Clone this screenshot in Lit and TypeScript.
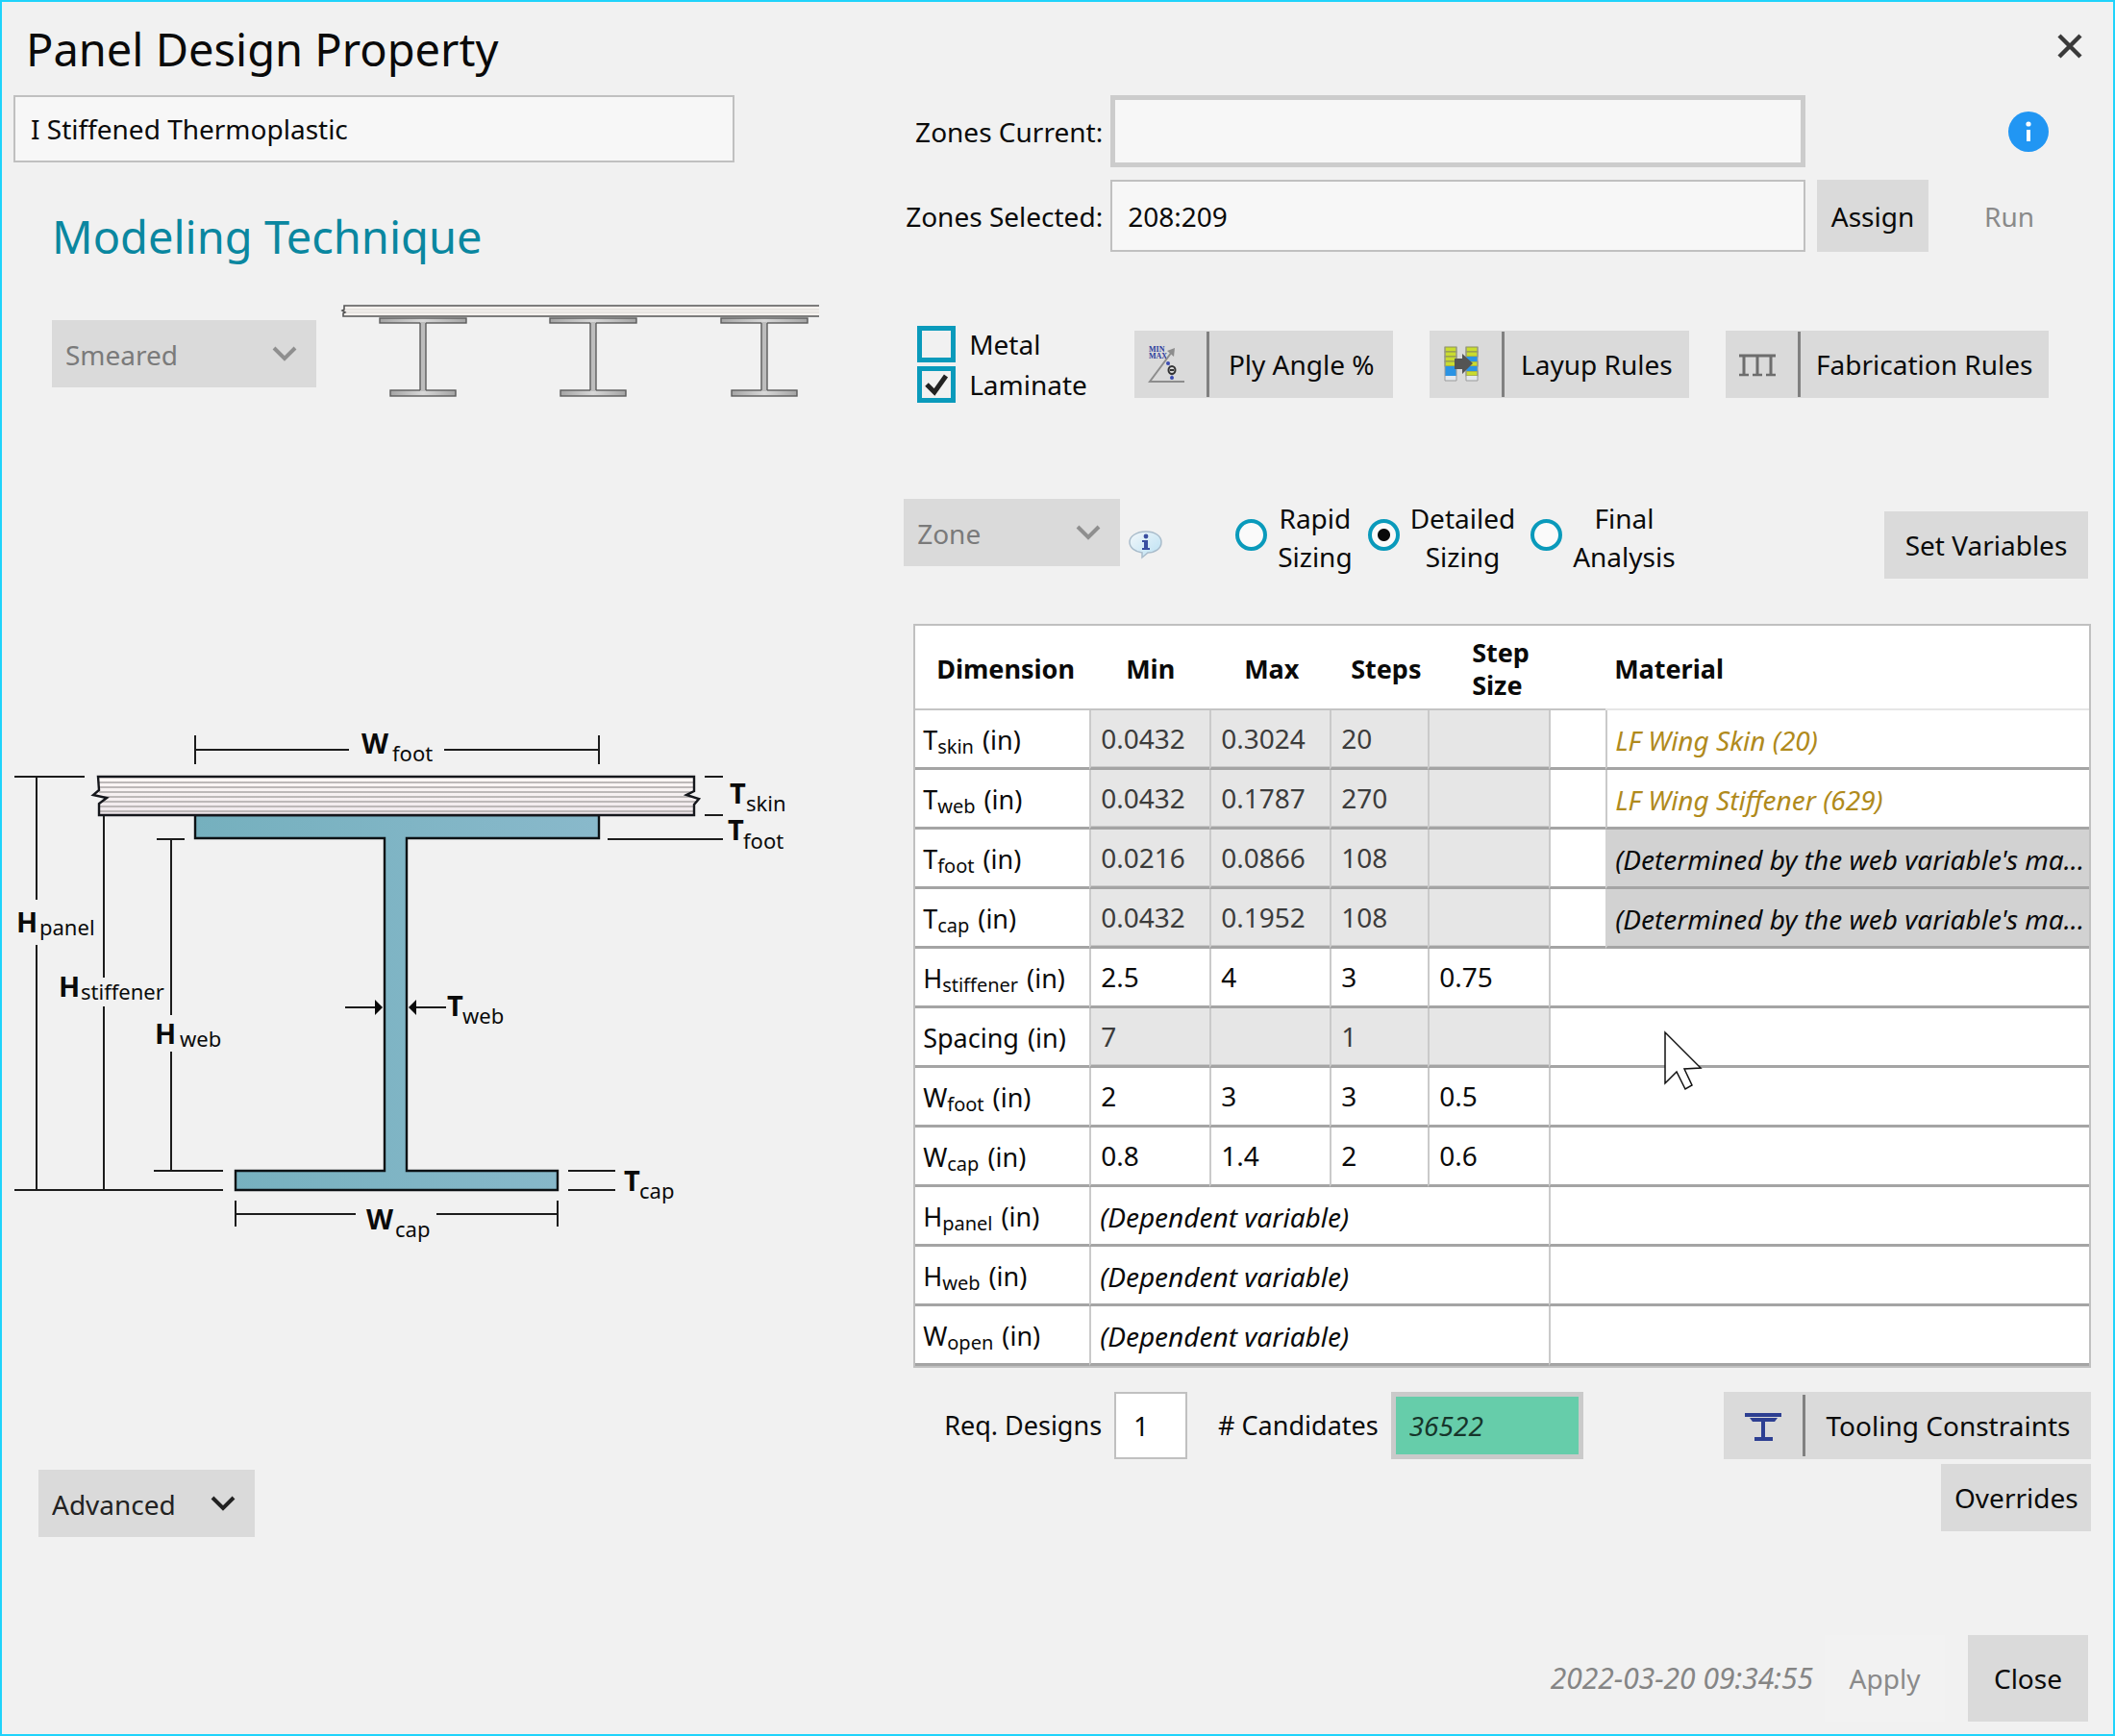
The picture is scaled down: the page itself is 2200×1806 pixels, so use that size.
import { LitElement, html, css, svg, nothing } from "lit";
import { customElement, state } from "lit/decorators.js";

interface Row {
  base: string;
  sub?: string;
  kind: "locked" | "open" | "dependent";
  values?: string[];
  material?: string;
  tone?: "link" | "derived";
}

const ROWS: Row[] = [
  { base: "T", sub: "skin", kind: "locked", values: ["0.0432", "0.3024", "20", ""], material: "LF Wing Skin (20)", tone: "link" },
  { base: "T", sub: "web", kind: "locked", values: ["0.0432", "0.1787", "270", ""], material: "LF Wing Stiffener (629)", tone: "link" },
  { base: "T", sub: "foot", kind: "locked", values: ["0.0216", "0.0866", "108", ""], material: "(Determined by the web variable's ma...", tone: "derived" },
  { base: "T", sub: "cap", kind: "locked", values: ["0.0432", "0.1952", "108", ""], material: "(Determined by the web variable's ma...", tone: "derived" },
  { base: "H", sub: "stiffener", kind: "open", values: ["2.5", "4", "3", "0.75"] },
  { base: "Spacing", kind: "locked", values: ["7", "", "1", ""] },
  { base: "W", sub: "foot", kind: "open", values: ["2", "3", "3", "0.5"] },
  { base: "W", sub: "cap", kind: "open", values: ["0.8", "1.4", "2", "0.6"] },
  { base: "H", sub: "panel", kind: "dependent" },
  { base: "H", sub: "web", kind: "dependent" },
  { base: "W", sub: "open", kind: "dependent" },
];

const COLUMNS = ["Min", "Max", "Steps", "Step Size"];

const chevron = html`<svg class="chevron" viewBox="0 0 28 18" aria-hidden="true">
  <path d="M3 3 L14 14 L25 3" fill="none" stroke="currentColor" stroke-width="4" />
</svg>`;

const plyIcon = html`<svg class="icon" viewBox="0 0 40 40" aria-hidden="true">
  <text x="1" y="7" font-family="Liberation Serif, serif" font-weight="700" font-size="8" fill="#2b3b9c">MIN</text>
  <text x="1" y="14" font-family="Liberation Serif, serif" font-weight="700" font-size="8" fill="#2b3b9c">MAX</text>
  <path d="M38 38 H2 L25 7" fill="none" stroke="#8d8d8d" stroke-width="2" />
  <path d="M28 3 L27 12 L20 6 Z" fill="#8d8d8d" />
  <path d="M20 18 Q26 24 25 35" fill="none" stroke="#8b93c4" stroke-width="1" />
  <circle cx="21" cy="19" r="2" fill="#3a4bb0" />
  <circle cx="25" cy="34" r="2" fill="#3a4bb0" />
  <ellipse cx="25" cy="26" rx="3.5" ry="4" fill="#dadada" stroke="#333" stroke-width="2" />
  <path d="M23 26 H27" stroke="#333" stroke-width="2" />
</svg>`;

const layupIcon = html`<svg class="icon" viewBox="0 0 40 40" aria-hidden="true">
  <g stroke="#8b8f5a" stroke-width="1">
    <rect x="2" y="2" width="12" height="5" fill="#c9dc2f" />
    <rect x="2" y="7" width="12" height="5" fill="#c9dc2f" />
    <rect x="2" y="12" width="12" height="5" fill="#c9dc2f" />
    <rect x="2" y="17" width="12" height="5" fill="#c9dc2f" />
    <rect x="24" y="2" width="12" height="5" fill="#c9dc2f" />
    <rect x="24" y="7" width="12" height="5" fill="#c9dc2f" />
    <rect x="24" y="17" width="12" height="5" fill="#c9dc2f" />
    <rect x="24" y="27" width="12" height="5" fill="#c9dc2f" />
  </g>
  <rect x="2" y="22" width="12" height="10" fill="#2a93e4" />
  <rect x="24" y="12" width="12" height="5" fill="#2a93e4" />
  <rect x="24" y="22" width="12" height="5" fill="#2a93e4" />
  <rect x="2" y="32" width="12" height="5" fill="#e4e8ee" />
  <rect x="24" y="32" width="12" height="5" fill="#e4e8ee" />
  <path d="M2 2 V37 H14 V2 M24 2 V37 H36 V2" fill="none" stroke="#9a9a9a" stroke-width="1" />
  <path d="M12 14 H20 V9 L31 19 L20 30 V25 H12 Z" fill="#545454" />
</svg>`;

const fabricationIcon = html`<svg class="icon" viewBox="0 0 40 40" aria-hidden="true">
  <g fill="none" stroke="#6d6d6d">
    <path d="M1 11 H39" stroke-width="3" />
    <path d="M6 11 V31 M20 11 V31 M34 11 V31" stroke-width="3" />
    <path d="M1 31 H11 M15 31 H25 M29 31 H39" stroke-width="2.4" />
  </g>
</svg>`;

const toolingIcon = html`<svg class="icon" viewBox="0 0 40 40" aria-hidden="true">
  <rect x="1" y="7" width="38" height="4" fill="#2d3f92" />
  <path d="M6 12 H35 L32 16 H9 Z" fill="#2d3f92" />
  <rect x="18" y="15" width="4" height="18" fill="#2d3f92" />
  <rect x="11" y="32" width="19" height="4" fill="#2d3f92" />
</svg>`;

@customElement("app-root")
export class AppRoot extends LitElement {
  @state() private sizing = "detailed";

  static styles = css`
    :host {
      display: block;
      font-family: "Noto Sans", "Open Sans", sans-serif;
      font-size: 28px;
      line-height: 40px;
      color: #0a0a0a;
    }
    * { box-sizing: border-box; }
    button, input, select {
      font: inherit;
      color: inherit;
      margin: 0;
      border-radius: 0;
    }
    .window {
      display: flex;
      flex-direction: column;
      min-height: 100vh;
      background: #f1f1f1;
      border: 2px solid #1fd3fb;
    }
    .titlebar {
      display: flex;
      justify-content: space-between;
      align-items: flex-start;
      padding: 14px 29px 13px 25px;
    }
    h1, h2 {
      margin: 0;
      font-size: 47px;
      line-height: 70px;
      font-weight: 400;
    }
    h2 {
      color: #0a87a0;
      margin: 42px 0 34px 40px;
    }
    .dismiss {
      width: 32px;
      height: 32px;
      margin-top: 16px;
      padding: 2px;
      border: 0;
      background: none;
    }
    .dismiss svg { display: block; width: 28px; height: 28px; }
    .body {
      display: grid;
      grid-template-columns: minmax(0, 3fr) minmax(0, 4fr);
      padding: 0 23px 0 12px;
    }
    .left { display: flex; flex-direction: column; align-items: flex-start; }
    .field {
      width: 100%;
      height: 75px;
      padding: 0 16px;
      border: 2px solid #c0c0c0;
      background: #f7f7f7;
    }
    .field.name { width: 750px; max-width: 90%; height: 70px; }
    .field.readonly { border: 5px solid #cccccc; }
    .technique { display: flex; align-items: center; gap: 25px; margin-left: 40px; }
    .profile { width: 500px; height: 106px; }
    .dropdown {
      display: grid;
      align-items: center;
      height: 70px;
      background: #dadada;
    }
    .dropdown > * { grid-area: 1 / 1; }
    .dropdown select {
      appearance: none;
      width: 100%;
      height: 70px;
      padding: 2px 14px 0;
      border: 0;
      background: none;
      opacity: 1;
    }
    .dropdown.off { color: #7a7a7a; }
    .dropdown.wide { width: 275px; }
    .dropdown.narrow { width: 225px; }
    .chevron {
      width: 28px;
      height: 18px;
      justify-self: end;
      margin-right: 19px;
      pointer-events: none;
    }
    .off .chevron { color: #8f8f8f; }
    .drawing { width: 100%; max-width: 810px; margin: 319px 0 219px 0; display: block; }
    .advanced { margin-left: 26px; color: #222; }
    .zones {
      display: grid;
      grid-template-columns: 207px minmax(0, 1fr) 120px 148px;
      gap: 13px 8px;
      align-items: center;
      padding-right: 13px;
    }
    .zones label { text-align: right; white-space: nowrap; justify-self: end; }
    .button {
      height: 70px;
      padding: 0 14px;
      border: 0;
      background: #dadada;
      white-space: nowrap;
    }
    .button.tall { height: 75px; }
    .button.quiet { background: none; color: #8a8a8a; padding-left: 18px; }
    .assign { margin-left: 4px; }
    .info { grid-column: 4; justify-self: end; margin-right: 31px; width: 42px; height: 42px; }
    .kinds { display: flex; align-items: center; padding: 77px 44px 0 14px; }
    .checks { display: grid; gap: 4px; flex: 0 0 226px; }
    .check { display: flex; align-items: center; gap: 14px; height: 38px; }
    .check input {
      appearance: none;
      display: grid;
      width: 40px;
      height: 38px;
      border: 5px solid #0a9abb;
    }
    .tick { grid-area: 1 / 1; width: 40px; height: 38px; pointer-events: none; }
    .box { display: grid; }
    .box input { grid-area: 1 / 1; }
    .rules { display: grid; grid-template-columns: 4fr 4fr 5fr; gap: 38px; flex: 1; }
    .iconic { display: flex; align-items: center; padding: 0; text-align: left; }
    .iconic .pane {
      display: flex;
      align-items: center;
      justify-content: center;
      flex: 0 0 78px;
      height: 68px;
      padding-right: 8px;
      border-right: 3px solid #808080;
    }
    .iconic .caption { flex: 1; text-align: center; }
    .icon { width: 40px; height: 40px; }
    .modes { display: flex; align-items: flex-start; padding: 100px 3px 0 0; }
    .bubble { width: 36px; height: 36px; margin: 30px 0 0 9px; }
    .radios { display: flex; gap: 16px; margin-left: 75px; }
    .radio { display: flex; align-items: center; gap: 11px; text-align: center; }
    .radio .line { display: block; }
    .radio input {
      appearance: none;
      width: 33px;
      height: 33px;
      margin-bottom: 5px;
      border: 4px solid #0a9abb;
      border-radius: 50%;
      background: #fafafa;
    }
    .radio input:checked { background: radial-gradient(circle, #0a0a0a 6px, #fafafa 7px); }
    .variables { margin: 13px 0 0 auto; width: 212px; }
    .sheet {
      position: relative;
      margin: 47px 0 0 10px;
      border: 2px solid #c0c0c0;
      background: #fff;
    }
    table { width: 100%; table-layout: fixed; border-collapse: separate; border-spacing: 0; }
    .c-dim { width: 181px; }
    .c-min { width: 125px; }
    .c-max { width: 125px; }
    .c-steps { width: 102px; }
    .c-size { width: 126px; }
    .c-gap { width: 59px; }
    th, td { padding: 0; text-align: left; font-weight: 400; }
    thead th {
      height: 88px;
      padding-top: 3px;
      font-weight: 700;
      font-size: 27px;
      line-height: 34px;
      border-bottom: 2px solid #c4c4c4;
    }
    thead th:last-child { padding-left: 9px; border-bottom-color: #e6e6e6; }
    thead .h-dim { padding-left: 22px; }
    thead .h-min { padding-left: 38px; }
    thead .h-max { padding-left: 36px; }
    thead .h-steps { padding-left: 22px; }
    thead .h-size { padding-left: 46px; }
    tbody th, tbody td { height: 62px; border-bottom: 3px solid #a4a4a4; border-left: 2px solid #cacaca; }
    tbody th { padding: 3px 0 0 8px; border-left: 0; white-space: nowrap; font-size: 27px; }
    .unit { margin-left: 9px; }
    .sub { font-size: 20px; line-height: 20px; position: relative; top: 4px; }
    .cell {
      display: block;
      width: 100%;
      height: 59px;
      padding: 0 0 1px 10px;
      border: 0;
      background: none;
    }
    .locked .cell { background: #e6e6e6; color: #3c3c3c; border-bottom: 1px solid #cacaca; opacity: 1; }
    .note { padding: 3px 0 0 9px; font-style: italic; }
    .material { padding: 3px 0 0 8px; font-style: italic; white-space: nowrap; }
    .material.link { color: #b08a1c; }
    .material.derived { background: #d2d2d2; border-left-color: #d2d2d2; }
    .pointer { position: absolute; left: 778px; top: 421px; width: 42px; height: 64px; }
    .totals { display: flex; align-items: center; padding: 25px 0 5px 42px; }
    .totals label { font-size: 27px; }
    .designs { width: 76px; height: 70px; margin: 0 32px 0 13px; padding: 0 18px; background: #fff; border: 2px solid #c0c0c0; }
    .candidates {
      width: 200px;
      height: 70px;
      margin-left: 13px;
      padding: 0 14px;
      border: 5px solid #cacaca;
      background: #66cdaa;
      color: #16352b;
      font-style: italic;
    }
    .tooling { margin-left: auto; width: 382px; }
    .tooling .pane { flex-basis: 85px; padding-right: 0; height: 64px; }
    .overrides { display: block; margin-left: auto; width: 156px; }
    .footer {
      display: flex;
      justify-content: flex-end;
      align-items: center;
      margin-top: auto;
      padding: 0 26px 13px 0;
    }
    .stamp { color: #858585; font-size: 30px; font-style: italic; margin-right: 12px; }
    .footer .button { height: 90px; width: 125px; }
    .footer .apply { background: #f2f2f2; color: #8a8a8a; margin-right: 24px; }
  `;

  private techniqueArt() {
    const beam = (x: number) => svg`
      <rect x=${x} y="17" width="90" height="5" fill="url(#steel)" stroke="#5c5c5c" stroke-width="1.4" />
      <rect x=${x + 11} y="92" width="68" height="6" fill="url(#steel)" stroke="#5c5c5c" stroke-width="1.4" />
      <rect x=${x + 42} y="21" width="6" height="72" fill="#bdbdbd" />
      <path d="M${x + 42} 22 V92 M${x + 48} 22 V92" stroke="#5c5c5c" stroke-width="1.4" />`;
    return html`<svg class="profile" viewBox="0 1 500 106" role="img" aria-label="Smeared stiffeners">
      <defs>
        <linearGradient id="steel"><stop offset="0" stop-color="#a4a4a4" /><stop offset=".5" stop-color="#d8d8d8" /><stop offset="1" stop-color="#a4a4a4" /></linearGradient>
      </defs>
      <rect x="4" y="4" width="494" height="11" fill="#f4f1ee" />
      <path d="M4 8 H498 M4 11 H498" stroke="#dcd8d5" stroke-width="1" />
      <path d="M498 4 H4 V8 L2 9 L5 11 L3 12 V15 H498" fill="none" stroke="#555" stroke-width="1.6" />
      ${beam(41)}${beam(218)}${beam(396)}
    </svg>`;
  }

  private sectionDrawing() {
    const label = (x: number, y: number, base: string, sx: number, sy: number, sub: string) => svg`
      <text x=${x} y=${y} font-weight="700" font-size="29">${base}</text>
      <text x=${sx} y=${sy} font-size="22">${sub}</text>`;
    return html`<svg class="drawing" viewBox="14 740 810 570" role="img" aria-label="I stiffener cross section">
      <defs>
        <linearGradient id="teal" gradientUnits="userSpaceOnUse" x1="203" y1="0" x2="623" y2="0">
          <stop offset="0" stop-color="#75b0be" /><stop offset="1" stop-color="#89b9cb" />
        </linearGradient>
        <linearGradient id="ply" x1="0" y1="0" x2="0" y2="1">
          <stop offset="0" stop-color="#fdf8f6" /><stop offset="1" stop-color="#efe8ec" />
        </linearGradient>
      </defs>
      <path d="M203 848 H623 V872 H423 V1218 H580 V1238 H245 V1218 H400 V872 H203 Z" fill="url(#teal)" stroke="#0c1114" stroke-width="2.4" />
      <path d="M102 808 L103 822 L97 827 L111 830 L103 836 V848 H722 V837 L727 831 L714 827 L722 823 V808 Z" fill="url(#ply)" />
      <path d="M103 814 H722 M103 819 H722 M103 824 H720 M106 829 H722 M106 834 H724 M103 839 H722 M103 844 H722" stroke="#bdb8b8" stroke-width="2" />
      <path d="M102 808 L103 822 L97 827 L111 830 L103 836 V848 H722 V837 L727 831 L714 827 L722 823 V808 Z" fill="none" stroke="#15171c" stroke-width="2.4" />
      <g stroke="#1c1c1c" stroke-width="2" fill="none">
        <path d="M203 765 V795 M623 765 V795 M203 780 H363 M462 780 H623" />
        <path d="M15 808 H88 M38 808 V936 M38 983 V1238 M15 1238 H232" />
        <path d="M108 849 V1017 M108 1047 V1238" />
        <path d="M163 873 H192 M178 873 V1056 M178 1094 V1218 M160 1218 H232" />
        <path d="M733 808 H752 M733 848 H752 M632 873 H752" />
        <path d="M591 1218 H640 M591 1238 H640" />
        <path d="M245 1249 V1276 M580 1249 V1276 M245 1263 H370 M454 1263 H580" />
        <path d="M359 1048 H392 M430 1048 H464" />
      </g>
      <path d="M398 1048 L390 1040 V1056 Z M425 1048 L433 1040 V1056 Z" fill="#0a0a0a" />
      <g fill="#0a0a0a">
        ${label(376, 784, "W", 408, 792, "foot")}
        ${label(17, 970, "H", 41, 973, "panel")}
        ${label(61, 1037, "H", 84, 1040, "stiffener")}
        ${label(161, 1086, "H", 187, 1089, "web")}
        ${label(759, 836, "T", 776, 844, "skin")}
        ${label(757, 874, "T", 773, 883, "foot")}
        ${label(465, 1057, "T", 481, 1065, "web")}
        ${label(649, 1239, "T", 665, 1247, "cap")}
        ${label(381, 1279, "W", 411, 1287, "cap")}
      </g>
    </svg>`;
  }

  private row(r: Row) {
    const name = r.base + (r.sub ? " " + r.sub : "");
    return html`<tr class=${r.kind}>
      <th scope="row">${r.base}${r.sub ? html`<span class="sub">${r.sub}</span>` : nothing}<span class="unit">(in)</span></th>
      ${r.kind === "dependent"
        ? html`<td colspan="4" class="note">(Dependent variable)</td>`
        : r.values!.map((v, i) => html`<td><input class="cell" aria-label="${name} ${COLUMNS[i]}" .value=${v} ?disabled=${r.kind === "locked"} /></td>`)}
      ${r.material
        ? html`<td></td><td class="material ${r.tone}">${r.material}</td>`
        : html`<td colspan="2"></td>`}
    </tr>`;
  }

  private radio(value: string, first: string, second: string) {
    return html`<label class="radio">
      <input type="radio" name="sizing" value=${value} ?checked=${this.sizing === value} @change=${() => (this.sizing = value)} />
      <span><span class="line">${first}</span><span class="line">${second}</span></span>
    </label>`;
  }

  render() {
    return html`<div class="window">
      <header class="titlebar">
        <h1>Panel Design Property</h1>
        <button class="dismiss" aria-label="Close window">
          <svg viewBox="0 0 28 28"><path d="M3 3 L25 25 M25 3 L3 25" stroke="#3a3a3a" stroke-width="4.4" /></svg>
        </button>
      </header>
      <main class="body">
        <section class="left">
          <input class="field name" aria-label="Property name" value="I Stiffened Thermoplastic" />
          <h2>Modeling Technique</h2>
          <div class="technique">
            <div class="dropdown wide off">
              <select aria-label="Modeling technique" disabled><option>Smeared</option></select>
              ${chevron}
            </div>
            ${this.techniqueArt()}
          </div>
          ${this.sectionDrawing()}
          <div class="dropdown narrow advanced">
            <select aria-label="Advanced options"><option>Advanced</option></select>
            ${chevron}
          </div>
        </section>

        <section class="right">
          <div class="zones">
            <label for="current">Zones Current:</label>
            <input id="current" class="field readonly" readonly />
            <svg class="info" viewBox="0 0 42 42" role="img" aria-label="Information">
              <circle cx="21" cy="21" r="21" fill="#2196f3" />
              <rect x="19" y="19" width="4" height="12" fill="#fff" />
              <circle cx="21" cy="13" r="2.6" fill="#fff" />
            </svg>
            <label for="selected">Zones Selected:</label>
            <input id="selected" class="field" value="208:209" />
            <button class="button tall assign">Assign</button>
            <button class="button tall quiet" disabled>Run</button>
          </div>

          <div class="kinds">
            <div class="checks">
              <label class="check"><span class="box"><input type="checkbox" /></span>Metal</label>
              <label class="check"><span class="box"><input type="checkbox" checked />
                <svg class="tick" viewBox="0 0 40 38" aria-hidden="true"><path d="M10 19 L18 27 L30 10" fill="none" stroke="#222" stroke-width="5" /></svg></span>Laminate</label>
            </div>
            <div class="rules">
              <button class="button iconic"><span class="pane">${plyIcon}</span><span class="caption">Ply Angle %</span></button>
              <button class="button iconic"><span class="pane">${layupIcon}</span><span class="caption">Layup Rules</span></button>
              <button class="button iconic"><span class="pane">${fabricationIcon}</span><span class="caption">Fabrication Rules</span></button>
            </div>
          </div>

          <div class="modes">
            <div class="dropdown narrow off">
              <select aria-label="Scope" disabled><option>Zone</option></select>
              ${chevron}
            </div>
            <svg class="bubble" viewBox="0 0 36 36" role="img" aria-label="Scope help">
              <defs>
                <linearGradient id="glass" x1="0" y1="0" x2="1" y2="1">
                  <stop offset="0" stop-color="#f4f8fb" /><stop offset="1" stop-color="#b9e0f2" />
                </linearGradient>
              </defs>
              <path d="M18 4 C28 4 34 9 34 15 C34 22 27 26 20 26 L14 31 L14 26 C7 25 1 21 1 15 C1 9 8 4 18 4 Z" fill="url(#glass)" stroke="#a9bccb" stroke-width="1.5" />
              <circle cx="18" cy="9" r="2.4" fill="#3b4fa0" />
              <path d="M14 13 H20 V21 H22 V23 H14 V21 H16 V15 H14 Z" fill="#3b4fa0" />
            </svg>
            <div class="radios" role="radiogroup" aria-label="Sizing method">
              ${this.radio("rapid", "Rapid", "Sizing")}
              ${this.radio("detailed", "Detailed", "Sizing")}
              ${this.radio("final", "Final", "Analysis")}
            </div>
            <button class="button variables">Set Variables</button>
          </div>

          <div class="sheet">
            <table>
              <colgroup>
                <col class="c-dim" /><col class="c-min" /><col class="c-max" /><col class="c-steps" /><col class="c-size" /><col class="c-gap" /><col />
              </colgroup>
              <thead>
                <tr>
                  <th class="h-dim" scope="col">Dimension</th>
                  <th class="h-min" scope="col">Min</th>
                  <th class="h-max" scope="col">Max</th>
                  <th class="h-steps" scope="col">Steps</th>
                  <th class="h-size" scope="col">Step<br />Size</th>
                  <th></th>
                  <th scope="col">Material</th>
                </tr>
              </thead>
              <tbody>${ROWS.map((r) => this.row(r))}</tbody>
            </table>
            <svg class="pointer" viewBox="0 0 42 64" aria-hidden="true">
              <path d="M2 2 V55 L14 43 L23 61 L30 57 L22 40 L39 39 Z" fill="#fff" stroke="#111" stroke-width="1.5" />
            </svg>
          </div>

          <div class="totals">
            <label for="designs">Req. Designs</label>
            <input id="designs" class="designs" value="1" />
            <label for="candidates"># Candidates</label>
            <input id="candidates" class="candidates" value="36522" readonly />
            <button class="button iconic tooling"><span class="pane">${toolingIcon}</span><span class="caption">Tooling Constraints</span></button>
          </div>
          <button class="button overrides">Overrides</button>
        </section>
      </main>
      <footer class="footer">
        <time class="stamp" datetime="2022-03-20T09:34:55">2022-03-20 09:34:55</time>
        <button class="button apply" disabled>Apply</button>
        <button class="button">Close</button>
      </footer>
    </div>`;
  }
}
